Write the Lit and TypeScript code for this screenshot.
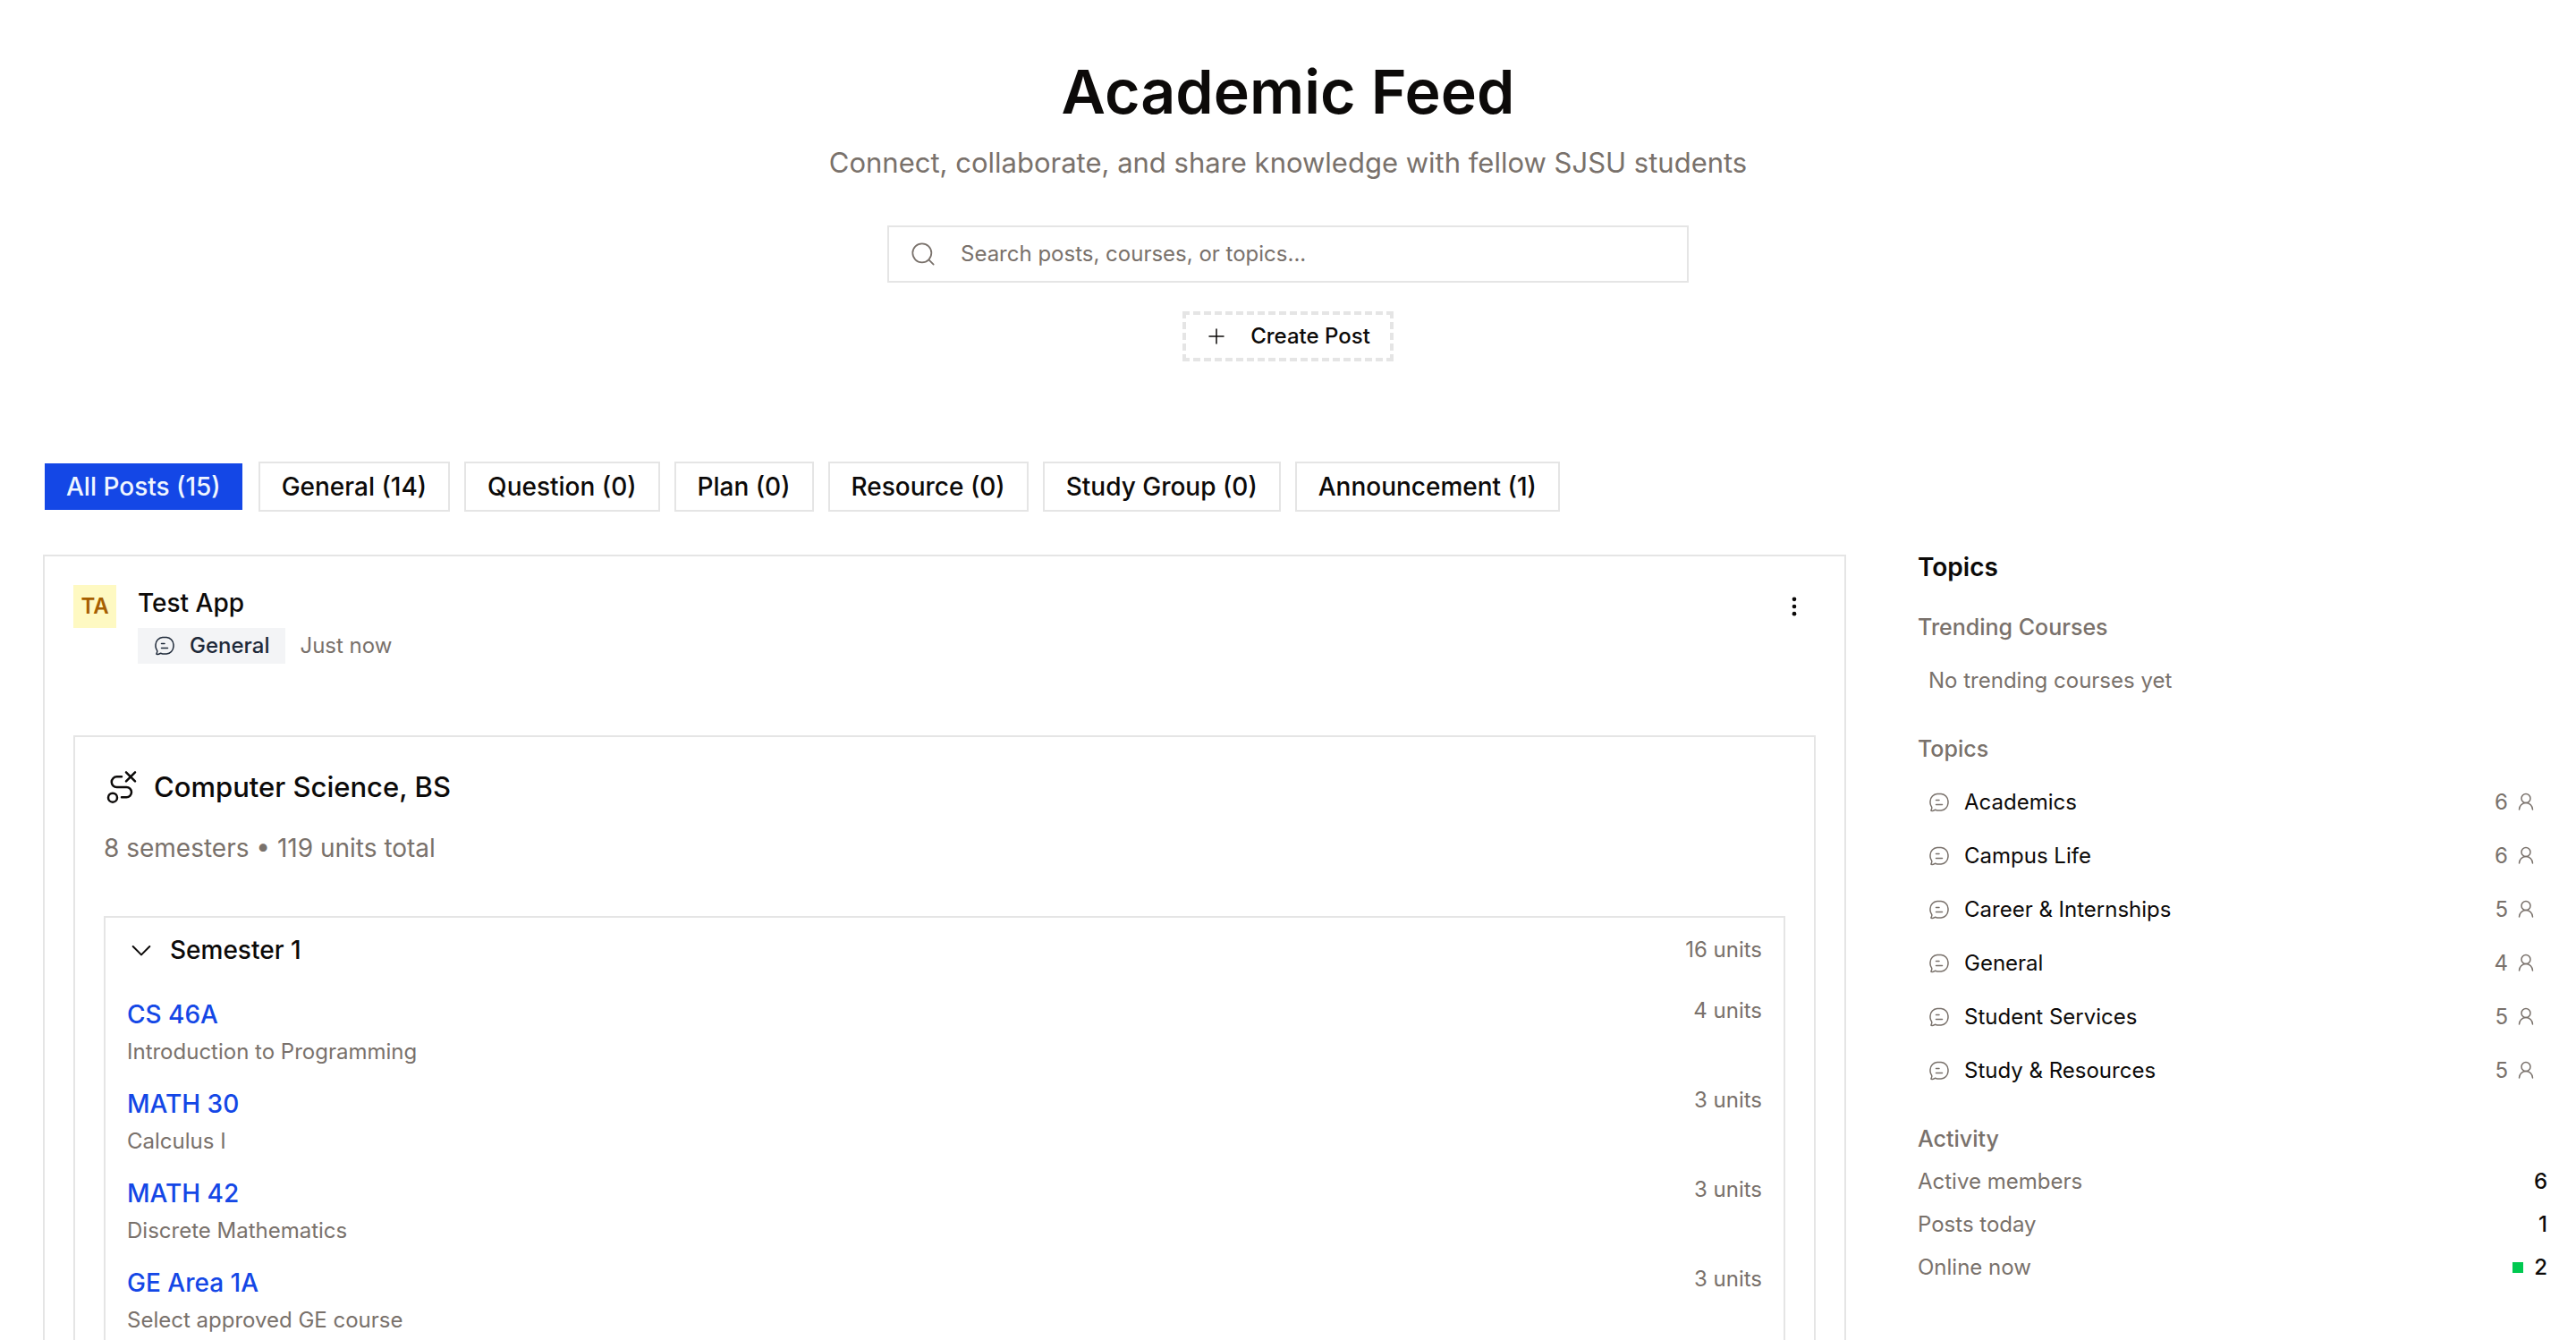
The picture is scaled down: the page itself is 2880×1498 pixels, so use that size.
import { LitElement, html, css, svg } from "lit";
import { customElement, property, state } from "lit/decorators.js";

const ICONS: Record<string, unknown> = {
  bubble: svg`<path d="M14.1706 20.8905C18.3536 20.6125 21.6856 17.2332 21.9598 12.9909C22.0134 12.1607 22.0134 11.3009 21.9598 10.4707C21.6856 6.22838 18.3536 2.84913 14.1706 2.57107C12.7435 2.47621 11.2536 2.47641 9.8294 2.57107C5.64639 2.84913 2.31441 6.22838 2.04024 10.4707C1.98659 11.3009 1.98659 12.1607 2.04024 12.9909C2.1401 14.536 2.82343 15.9666 3.62791 17.1746C4.09501 18.0203 3.78674 19.0758 3.30021 19.9978C2.94941 20.6626 2.77401 20.995 2.91484 21.2351C3.05568 21.4752 3.37026 21.4829 3.99943 21.4982C5.24367 21.5285 6.08268 21.1757 6.74868 20.6846C7.1264 20.4061 7.31527 20.2668 7.44544 20.2508C7.5756 20.2348 7.83177 20.3403 8.34401 20.5513C8.8044 20.7409 9.33896 20.8579 9.8294 20.8905C11.2536 20.9852 12.7435 20.9854 14.1706 20.8905Z"/><path d="M8.500 14.500H15.500M8.500 9.500H12"/>`,
  search: svg`<circle cx="11" cy="11" r="9"/><path d="M17.500 17.500L22 22"/>`,
  plus: svg`<path d="M12 4V20M4 12H20"/>`,
  route: svg`<circle cx="6" cy="19" r="3"/><path d="M12 5H8.750a3.500 3.500 0 0 0 0 7h6.500a3.350 3.350 0 0 1 0 6.700H12"/><path d="M15 2l6 6M21 2l-6 6"/>`,
  chevron: svg`<path d="M5 9l7 7l7 -7"/>`,
  person: svg`<circle cx="12" cy="7.500" r="5"/><path d="M4.500 20a7.500 7.500 0 0 1 15 0"/>`,
  dots: svg`<circle cx="12" cy="5" r="2"/><circle cx="12" cy="12" r="2"/><circle cx="12" cy="19" r="2"/>`,
};

@customElement("ui-icon")
export class UiIcon extends LitElement {
  static styles = css`
    :host { display: inline-flex; flex: none; width: 24px; height: 24px; }
    svg { width: 100%; height: 100%; fill: none; stroke: currentColor; stroke-width: 1.5; stroke-linecap: round; stroke-linejoin: round; }
    .solid { fill: currentColor; stroke: none; }
  `;
  @property() name = "";
  render() {
    return html`<svg class=${this.name === "dots" ? "solid" : ""} viewBox="0 0 24 24" aria-hidden="true">${ICONS[this.name]}</svg>`;
  }
}

const FILTERS: [string, number][] = [
  ["All Posts", 15], ["General", 14], ["Question", 0], ["Plan", 0],
  ["Resource", 0], ["Study Group", 0], ["Announcement", 1],
];
const COURSES: [string, string, number][] = [
  ["CS 46A", "Introduction to Programming", 4],
  ["MATH 30", "Calculus I", 3],
  ["MATH 42", "Discrete Mathematics", 3],
  ["GE Area 1A", "Select approved GE course", 3],
];
const TOPICS: [string, number][] = [
  ["Academics", 6], ["Campus Life", 6], ["Career & Internships", 5],
  ["General", 4], ["Student Services", 5], ["Study & Resources", 5],
];

@customElement("app-root")
export class AppRoot extends LitElement {
  static styles = css`
    :host {
      --ink: #0c0a09;
      --muted: #79716b;
      --line: #e5e5e5;
      --blue: #1447e6;
      display: flex;
      flex-direction: column;
      min-height: 100vh;
      background: #fff;
      color: var(--ink);
      font: 400 24px/32px Inter, "Liberation Sans", sans-serif;
    }
    * { box-sizing: border-box; }
    h1, h2, h3, p, ul, dl, dd { margin: 0; padding: 0; }
    ul { list-style: none; }
    button, input { font: inherit; color: inherit; border-radius: 0; margin: 0; }
    button { cursor: pointer; }
    a { text-decoration: none; color: inherit; }
    .hero { display: flex; flex-direction: column; align-items: center; padding-top: 64px; }
    h1 { font-size: 68px; line-height: 76px; font-weight: 600; }
    .lead { font-size: 31px; line-height: 48px; color: var(--muted); margin-top: 18px; }
    .search {
      display: flex; align-items: center; gap: 28px; width: 896px; max-width: 100%; height: 64px;
      margin-top: 46px; padding: 0 24px; border: 2px solid var(--line); color: var(--muted);
    }
    .search ui-icon { width: 28px; height: 28px; }
    .search input { flex: 1; min-width: 0; padding: 0; border: 0; outline: 0; background: none; color: var(--ink); }
    .search input::placeholder { color: var(--muted); opacity: 1; }
    .create {
      display: flex; align-items: center; gap: 26px; height: 56px; margin-top: 32px; padding: 0 22px;
      border: 4px dashed var(--line); background: none; font-weight: 500;
    }
    .filters { display: flex; flex-wrap: wrap; gap: 16px; padding: 112px 48px 0; }
    .filter {
      height: 56px; padding: 0 24px; border: 2px solid var(--line);
      background: #fff; font-size: 28px; line-height: 40px; font-weight: 500;
    }
    .filter.on { background: var(--blue); background-clip: padding-box; border-color: transparent; color: #eff6ff; }
    .body {
      flex: 1; display: grid; grid-template-columns: minmax(0, 1fr) 704px; gap: 80px;
      padding: 48px 32px 0 48px;
    }
    main, .post, .plan, .semester { display: flex; flex-direction: column; }
    .post, .plan, .semester { flex: 1; border: 2px solid var(--line); border-bottom: 0; }
    .post { padding: 32px 32px 0; }
    .who { display: flex; gap: 24px; }
    .avatar {
      display: grid; place-items: center; width: 48px; height: 48px;
      background: #fef9c2; color: #a65f00; font-weight: 600;
    }
    .meta { flex: 1; }
    .name { font-size: 28px; line-height: 40px; font-weight: 500; }
    .sub { display: flex; align-items: center; gap: 16px; margin-top: 8px; color: var(--muted); }
    .badge {
      display: flex; align-items: center; gap: 16px; height: 40px; padding: 0 18px;
      background: #f3f4f6; color: #1e2939; font-weight: 500;
    }
    .menu { display: grid; place-items: center; width: 48px; height: 48px; padding: 0; border: 0; background: none; }
    .menu ui-icon { width: 28px; height: 28px; }
    .plan { margin-top: 80px; padding: 32px 32px 0; }
    .plan h2 { display: flex; align-items: center; gap: 16px; font-size: 31px; line-height: 48px; font-weight: 500; }
    .plan h2 ui-icon { width: 40px; height: 40px; }
    .total { font-size: 28px; line-height: 40px; color: var(--muted); margin-top: 24px; }
    .semester { margin-top: 56px; padding: 0 24px; }
    .toggle {
      display: flex; align-items: center; gap: 16px; width: 100%; height: 72px; padding: 0; border: 0; background: none;
      font-size: 28px; font-weight: 500; text-align: left;
    }
    .toggle ui-icon { width: 32px; height: 32px; }
    .units { margin-left: auto; font-size: 24px; line-height: 32px; font-weight: 400; color: var(--muted); }
    .course { display: flex; padding: 16px 0 6px; }
    .code { display: block; font-size: 28px; line-height: 40px; font-weight: 500; color: var(--blue); }
    .title { margin-top: 6px; color: var(--muted); }
    aside h2 { font-size: 28px; line-height: 28px; font-weight: 600; margin-bottom: 37px; }
    aside h3 { font-size: 25px; line-height: 32px; font-weight: 500; color: var(--muted); }
    .empty { padding: 14px 12px; margin: 14px 0 30px; color: var(--muted); }
    .topics { margin: 14px 0 30px; }
    .topic { display: flex; align-items: center; height: 60px; padding: 0 12px; gap: 16px; }
    .topic ui-icon { color: var(--muted); }
    .count { display: flex; align-items: center; gap: 8px; margin-left: auto; color: var(--muted); }
    .stat { display: flex; justify-content: space-between; margin-top: 16px; color: var(--muted); }
    .stat dd { display: flex; align-items: center; gap: 12px; color: var(--ink); font-weight: 500; }
    .online { width: 12px; height: 12px; background: #00c950; }
  `;

  @state() private filter = "All Posts";
  @state() private open = true;

  render() {
    return html`
      <header class="hero">
        <h1>Academic Feed</h1>
        <p class="lead">Connect, collaborate, and share knowledge with fellow SJSU students</p>
        <label class="search">
          <ui-icon name="search"></ui-icon>
          <input type="search" aria-label="Search posts" placeholder="Search posts, courses, or topics..." />
        </label>
        <button class="create"><ui-icon name="plus"></ui-icon>Create Post</button>
      </header>
      <nav class="filters" aria-label="Post type">
        ${FILTERS.map(([name, n]) => html`
          <button class="filter ${this.filter === name ? "on" : ""}" aria-pressed=${this.filter === name}
            @click=${() => (this.filter = name)}>${name} (${n})</button>`)}
      </nav>
      <div class="body">
        <main>
          <article class="post">
            <div class="who">
              <div class="avatar">TA</div>
              <div class="meta">
                <div class="name">Test App</div>
                <div class="sub"><span class="badge"><ui-icon name="bubble"></ui-icon>General</span><span>Just now</span></div>
              </div>
              <button class="menu" aria-label="Post options"><ui-icon name="dots"></ui-icon></button>
            </div>
            <section class="plan">
              <h2><ui-icon name="route"></ui-icon>Computer Science, BS</h2>
              <p class="total">8 semesters • 119 units total</p>
              <div class="semester">
                <button class="toggle" aria-expanded=${this.open} @click=${() => (this.open = !this.open)}>
                  <ui-icon name="chevron"></ui-icon>Semester 1<span class="units">16 units</span>
                </button>
                ${this.open ? html`<ul>${COURSES.map(([code, title, u]) => html`
                  <li class="course">
                    <div><a class="code" href="#course">${code}</a><p class="title">${title}</p></div>
                    <span class="units">${u} units</span>
                  </li>`)}</ul>` : ""}
              </div>
            </section>
          </article>
        </main>
        <aside>
          <h2>Topics</h2>
          <h3>Trending Courses</h3>
          <p class="empty">No trending courses yet</p>
          <h3>Topics</h3>
          <ul class="topics">
            ${TOPICS.map(([name, n]) => html`
              <li><a class="topic" href="#topic"><ui-icon name="bubble"></ui-icon>${name}
                <span class="count">${n}<ui-icon name="person"></ui-icon></span></a></li>`)}
          </ul>
          <h3>Activity</h3>
          <dl>
            <div class="stat"><dt>Active members</dt><dd>6</dd></div>
            <div class="stat"><dt>Posts today</dt><dd>1</dd></div>
            <div class="stat"><dt>Online now</dt><dd><span class="online"></span>2</dd></div>
          </dl>
        </aside>
      </div>`;
  }
}
